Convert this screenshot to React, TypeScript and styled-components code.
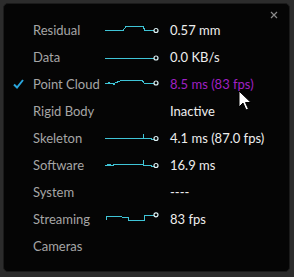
import React from "react";
import styled, { createGlobalStyle } from "styled-components";

const Global = createGlobalStyle`
  html, body { margin: 0; padding: 0; background: #2c2c2c; }
  body { width: 294px; height: 277px; overflow: hidden; font-family: Lato, "Open Sans", sans-serif; }
`;

const Panel = styled.div`
  position: relative;
  box-sizing: border-box;
  margin: 3px 0 0 3px;
  width: 287px;
  height: 269px;
  background: #050505;
  border: 1px solid #1b1b1b;
  border-radius: 5px;
  padding-top: 12px;
`;

const Close = styled.svg`
  position: absolute;
  top: 7px;
  right: 11px;
`;

const Cursor = styled.svg`
  position: absolute;
  left: 234px;
  top: 86px;
`;

const Row = styled.div`
  display: grid;
  grid-template-columns: 29px 71px 66px 1fr;
  align-items: center;
  height: 27px;
`;

const CheckCell = styled.div`
  display: flex;
  justify-content: flex-end;
  padding-right: 9px;
`;

const Label = styled.span`
  font-size: 13px;
  color: #a6a6a6;
  white-space: nowrap;
`;

const Spark = styled.svg`
  display: block;
`;

const Value = styled.span<{ $accent?: boolean }>`
  font-size: 13px;
  color: ${(p) => (p.$accent ? "#a020c4" : "#eeeeee")};
  white-space: nowrap;
`;

type Line = { d: string; cx: number; cy: number };

type Item = { label: string; value?: string; line?: Line; checked?: boolean; accent?: boolean };

const items: Item[] = [
  { label: "Residual", value: "0.57 mm", line: { d: "M1 7.5 H19 L22 3.5 H39 L41 7.5 H50", cx: 52, cy: 7.5 } },
  { label: "Data", value: "0.0 KB/s", line: { d: "M1 8 H50", cx: 52, cy: 8 } },
  {
    label: "Point Cloud",
    value: "8.5 ms (83 fps)",
    checked: true,
    accent: true,
    line: {
      d: "M1 6 H3 L4 7 L5 5.5 L6 7 L7 6 H9 L10 8 L11 6 L12 5 L13 6 L14 4 H16 L17 3 H38 L40 6 H50",
      cx: 52,
      cy: 6,
    },
  },
  { label: "Rigid Body", value: "Inactive" },
  { label: "Skeleton", value: "4.1 ms (87.0 fps)", line: { d: "M1 7.5 H39 V2.5 V7.5 H47 L48 8.5 H50", cx: 52, cy: 7.5 } },
  {
    label: "Software",
    value: "16.9 ms",
    line: { d: "M1 7.5 H3 L4 6.5 L5 7.5 L6 6.5 L7 7.5 H9 L10 6.5 H39 V2 V7.5 H47 L48 8.5 H50", cx: 52, cy: 7.5 },
  },
  { label: "System", value: "----" },
  {
    label: "Streaming",
    value: "83 fps",
    line: { d: "M2 8 V4.5 H5 L7 4 H16 L18 5 H24 V8 H40 V8.5 L41 3 H50", cx: 52, cy: 2.8 },
  },
  { label: "Cameras" },
];

const Sparkline: React.FC<{ line: Line }> = ({ line }) => (
  <Spark width="56" height="14" viewBox="0 0 56 14">
    <path d={line.d} fill="none" stroke="#3fc4d6" strokeWidth="1" shapeRendering="crispEdges" />
    <circle cx={line.cx} cy={line.cy} r="2" fill="#050505" stroke="#dff4f7" strokeWidth="1.2" />
  </Spark>
);

const Check = () => (
  <svg width="11" height="10" viewBox="0 0 11 10">
    <path d="M1 5.5 L4 8.5 L10 1" fill="none" stroke="#2aa6dd" strokeWidth="2" />
  </svg>
);

export default function App() {
  return (
    <>
      <Global />
      <Panel>
        <Close width="8" height="8" viewBox="0 0 8 8">
          <path d="M1 1 L7 7 M7 1 L1 7" stroke="#8a8a8a" strokeWidth="1.2" />
        </Close>
        {items.map((it) => (
          <Row key={it.label}>
            <CheckCell>{it.checked ? <Check /> : null}</CheckCell>
            <Label>{it.label}</Label>
            <div>{it.line ? <Sparkline line={it.line} /> : null}</div>
            <Value $accent={it.accent}>{it.value ?? ""}</Value>
          </Row>
        ))}
        <Cursor width="14" height="22" viewBox="0 0 14 22">
          <path d="M1 1 V17 L5 13 L8 20 L10.5 19 L7.5 12.5 H13 Z" fill="#ffffff" stroke="#000000" strokeWidth="1" />
        </Cursor>
      </Panel>
    </>
  );
}
